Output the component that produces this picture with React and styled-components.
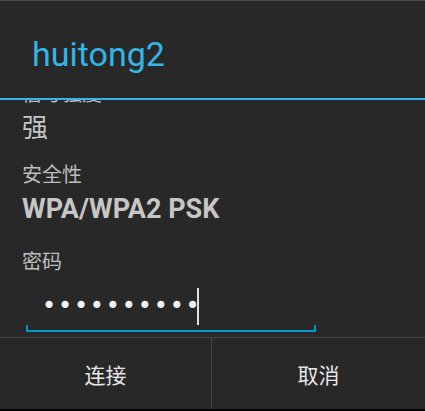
import React from "react";
import styled, { createGlobalStyle } from "styled-components";

const GlobalStyle = createGlobalStyle`
  html, body {
    margin: 0;
    padding: 0;
    background: #282828;
  }
`;

const Dialog = styled.div`
  width: 425px;
  height: 411px;
  display: flex;
  flex-direction: column;
  background: #282828;
  border-top: 1px solid #4a4a4a;
  border-bottom: 2px solid #000;
  box-sizing: border-box;
  font-family: Roboto, "Noto Sans CJK SC", sans-serif;
  overflow: hidden;
`;

const TitleBar = styled.div`
  height: 97px;
  display: flex;
  align-items: center;
  padding-left: 32px;
  border-bottom: 2px solid #33b5e5;
  flex-shrink: 0;
`;

const Title = styled.h1`
  margin: 0;
  font-size: 34px;
  font-weight: 400;
  line-height: 40px;
  color: #33b5e5;
  padding-top: 8px;
`;

const Body = styled.div`
  flex: 1;
  overflow: hidden;
  padding: 0 22px;
`;

/* list is scrolled a little: the first label sits under the title rule */
const Scroller = styled.div`
  margin-top: -18px;
`;

const Field = styled.div`
  display: flex;
  flex-direction: column;
  gap: 7px;
  margin-bottom: ${p => (p.$gap === undefined ? 20 : p.$gap)}px;
`;

const Label = styled.div`
  font-size: 20px;
  line-height: 24px;
  color: #bdbdbd;
`;

const Value = styled.div`
  font-size: ${p => (p.$bold ? 27 : 26)}px;
  line-height: 30px;
  font-weight: ${p => (p.$bold ? 700 : 400)};
  color: #c6c6c6;
`;

const PasswordBox = styled.div`
  position: relative;
  width: 290px;
  height: 46px;
  margin-left: 4px;
  margin-top: 12px;
  border-bottom: 2px solid #0099cc;
  display: flex;
  align-items: center;
  padding: 0 0 4px 16px;
  box-sizing: border-box;

  &::before,
  &::after {
    content: "";
    position: absolute;
    bottom: -2px;
    width: 2px;
    height: 7px;
    background: #0099cc;
  }
  &::before {
    left: 0;
  }
  &::after {
    right: 0;
  }
`;

const Dots = styled.span`
  font-family: "DejaVu Sans", sans-serif;
  font-size: 24px;
  letter-spacing: 1.8px;
  color: #f2f2f2;
  line-height: 24px;
`;

const Cursor = styled.span`
  display: inline-block;
  width: 2px;
  height: 37px;
  background: #e0e0e0;
  margin-left: -5px;
`;

const Buttons = styled.div`
  height: 71px;
  display: flex;
  border-top: 1px solid #464646;
  flex-shrink: 0;
`;

const Button = styled.button`
  flex: ${p => (p.$wide ? "0 0 212px" : 1)};
  background: transparent;
  border: none;
  border-right: ${p => (p.$divider ? "1px solid #464646" : "none")};
  color: #e6e6e6;
  font-family: "Noto Sans CJK SC", sans-serif;
  font-size: 21px;
  padding: 0;
  cursor: pointer;
`;

export default function App() {
  return (
    <>
      <GlobalStyle />
      <Dialog>
        <TitleBar>
          <Title>huitong2</Title>
        </TitleBar>
        <Body>
          <Scroller>
            <Field>
              <Label>信号强度</Label>
              <Value>强</Value>
            </Field>
            <Field $gap={26}>
              <Label>安全性</Label>
              <Value $bold>WPA/WPA2 PSK</Value>
            </Field>
            <Field $gap={0}>
              <Label>密码</Label>
            </Field>
            <PasswordBox>
              <Dots>••••••••••</Dots>
              <Cursor />
            </PasswordBox>
          </Scroller>
        </Body>
        <Buttons>
          <Button $wide $divider>连接</Button>
          <Button>取消</Button>
        </Buttons>
      </Dialog>
    </>
  );
}
